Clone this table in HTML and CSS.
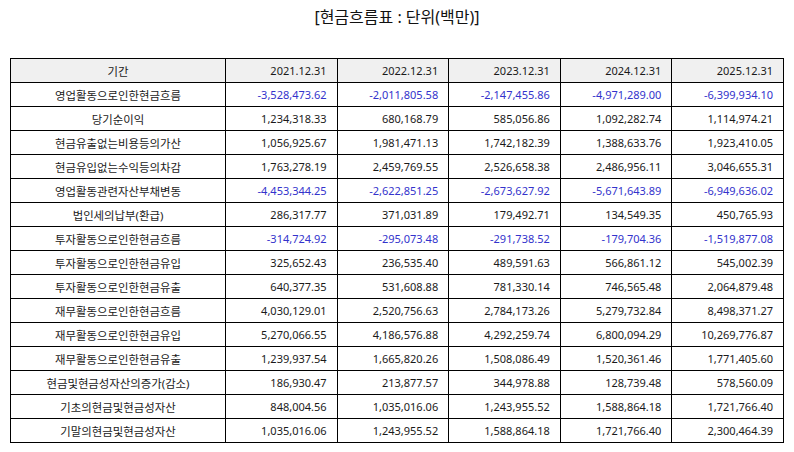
FILE: index.html
```html
<!DOCTYPE html>
<html lang="ko">
<head>
<meta charset="utf-8">
<link rel="stylesheet" href="styles.css">
</head>
<body>
<h1 class="title">[현금흐름표 : 단위(백만)]</h1>
<table class="cf">
<colgroup><col class="c-label"><col><col><col><col><col></colgroup>
<thead>
<tr><th class="label">기간</th><th>2021.12.31</th><th>2022.12.31</th><th>2023.12.31</th><th>2024.12.31</th><th>2025.12.31</th></tr>
</thead>
<tbody>
<tr><td class="label">영업활동으로인한현금흐름</td><td class="neg">-3,528,473.62</td><td class="neg">-2,011,805.58</td><td class="neg">-2,147,455.86</td><td class="neg">-4,971,289.00</td><td class="neg">-6,399,934.10</td></tr>
<tr><td class="label">당기순이익</td><td>1,234,318.33</td><td>680,168.79</td><td>585,056.86</td><td>1,092,282.74</td><td>1,114,974.21</td></tr>
<tr><td class="label">현금유출없는비용등의가산</td><td>1,056,925.67</td><td>1,981,471.13</td><td>1,742,182.39</td><td>1,388,633.76</td><td>1,923,410.05</td></tr>
<tr><td class="label">현금유입없는수익등의차감</td><td>1,763,278.19</td><td>2,459,769.55</td><td>2,526,658.38</td><td>2,486,956.11</td><td>3,046,655.31</td></tr>
<tr><td class="label">영업활동관련자산부채변동</td><td class="neg">-4,453,344.25</td><td class="neg">-2,622,851.25</td><td class="neg">-2,673,627.92</td><td class="neg">-5,671,643.89</td><td class="neg">-6,949,636.02</td></tr>
<tr><td class="label">법인세의납부(환급)</td><td>286,317.77</td><td>371,031.89</td><td>179,492.71</td><td>134,549.35</td><td>450,765.93</td></tr>
<tr><td class="label">투자활동으로인한현금흐름</td><td class="neg">-314,724.92</td><td class="neg">-295,073.48</td><td class="neg">-291,738.52</td><td class="neg">-179,704.36</td><td class="neg">-1,519,877.08</td></tr>
<tr><td class="label">투자활동으로인한현금유입</td><td>325,652.43</td><td>236,535.40</td><td>489,591.63</td><td>566,861.12</td><td>545,002.39</td></tr>
<tr><td class="label">투자활동으로인한현금유출</td><td>640,377.35</td><td>531,608.88</td><td>781,330.14</td><td>746,565.48</td><td>2,064,879.48</td></tr>
<tr><td class="label">재무활동으로인한현금흐름</td><td>4,030,129.01</td><td>2,520,756.63</td><td>2,784,173.26</td><td>5,279,732.84</td><td>8,498,371.27</td></tr>
<tr><td class="label">재무활동으로인한현금유입</td><td>5,270,066.55</td><td>4,186,576.88</td><td>4,292,259.74</td><td>6,800,094.29</td><td>10,269,776.87</td></tr>
<tr><td class="label">재무활동으로인한현금유출</td><td>1,239,937.54</td><td>1,665,820.26</td><td>1,508,086.49</td><td>1,520,361.46</td><td>1,771,405.60</td></tr>
<tr><td class="label">현금및현금성자산의증가(감소)</td><td>186,930.47</td><td>213,877.57</td><td>344,978.88</td><td>128,739.48</td><td>578,560.09</td></tr>
<tr><td class="label">기초의현금및현금성자산</td><td>848,004.56</td><td>1,035,016.06</td><td>1,243,955.52</td><td>1,588,864.18</td><td>1,721,766.40</td></tr>
<tr><td class="label">기말의현금및현금성자산</td><td>1,035,016.06</td><td>1,243,955.52</td><td>1,588,864.18</td><td>1,721,766.40</td><td>2,300,464.39</td></tr>
</tbody>
</table>
</body>
</html>
```
FILE: styles.css
```css
html, body {
  margin: 0;
  padding: 0;
  background: #ffffff;
}
body {
  padding: 0 10px;
  font-family: "Noto Sans", "Noto Sans CJK KR", sans-serif;
  color: #1a1a1a;
}
.title {
  margin: 0;
  padding-top: 5px;
  height: 58px;
  box-sizing: border-box;
  text-align: center;
  font-size: 16px;
  font-weight: normal;
  line-height: 24px;
  color: #111111;
}
.cf {
  width: 100%;
  border-collapse: collapse;
  table-layout: fixed;
  font-size: 11px;
}
.c-label {
  width: 215px;
}
.cf th, .cf td {
  border: 1px solid #000000;
  height: 23px;
  padding: 0 10px;
  text-align: right;
  font-weight: normal;
  white-space: nowrap;
}
.cf th {
  background: #f0f0f0;
}
.cf .label {
  text-align: center;
  font-size: 11.4px;
}
.cf td.neg {
  color: #3333cc;
}
```
